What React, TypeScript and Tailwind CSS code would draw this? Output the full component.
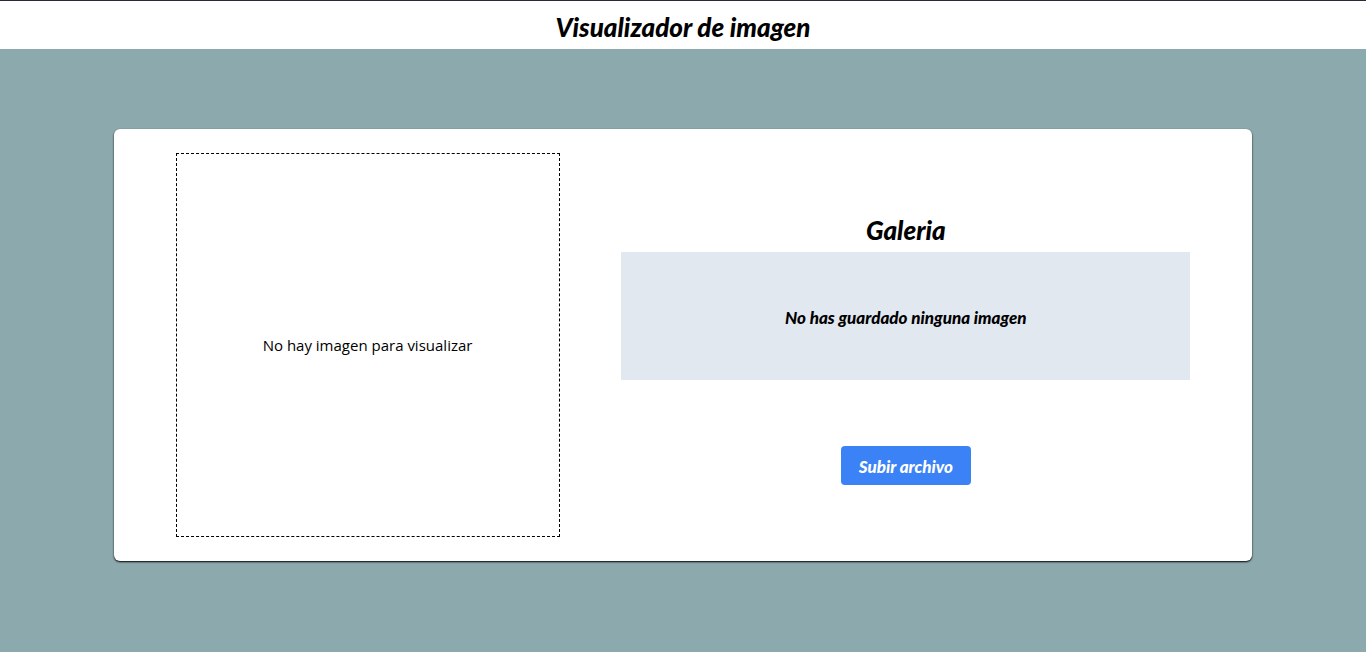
export default function App() {
  return (
    <div className="flex min-h-screen flex-col bg-[#8ca9ad] font-['Open_Sans','Noto_Sans',sans-serif] text-black">
      <header className="border-t border-[#2b2a3a] bg-white pt-[10px] pb-[6px] text-center">
        <h1 className="font-['Lato',sans-serif] text-[26px] leading-8 font-black italic">
          Visualizador de imagen
        </h1>
      </header>
      <main className="flex flex-1 items-start justify-center pt-20">
        <section className="flex w-5/6 items-center justify-evenly rounded-md bg-white py-6 shadow-[0_1px_2px_0_#000]">
          <div className="flex size-96 items-center justify-center border border-dashed border-black">
            <p className="text-[15px] leading-6">No hay imagen para visualizar</p>
          </div>
          <div className="flex w-1/2 flex-col items-center font-['Lato',sans-serif] font-black italic">
            <h2 className="pt-[9px] pb-[6px] text-[26px] leading-8">Galeria</h2>
            <div className="flex h-32 w-full items-center justify-center bg-slate-200">
              <p className="pt-1 text-[17px] leading-6">No has guardado ninguna imagen</p>
            </div>
            <button
              type="button"
              className="mt-[66px] min-w-[130px] rounded bg-[#3b82f6] px-4 pt-[9px] pb-[6px] text-[17px] leading-6 text-white"
            >
              Subir archivo
            </button>
          </div>
        </section>
      </main>
    </div>
  );
}
